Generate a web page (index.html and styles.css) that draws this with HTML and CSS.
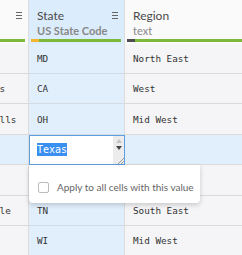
FILE: index.html
```html
<!DOCTYPE html>
<html lang="en">
<head>
    <meta charset="UTF-8">
    <meta name="viewport" content="width=device-width, initial-scale=1.0">
    <title>Sheet editor</title>
    <link rel="stylesheet" href="styles.css">
</head>
<body>
    <div class="viewport">
        <div class="sheet">
            <div class="head-cell">
                <div class="col-title"><span>City</span><span class="menu"></span></div>
                <div class="col-sub">text</div>
                <div class="col-bar"><span class="bar-type type-text"></span><span class="bar-fill"></span></div>
            </div>
            <div class="head-cell state">
                <div class="col-title"><span>State</span><span class="menu"></span></div>
                <div class="col-sub">US State Code</div>
                <div class="col-bar"><span class="bar-type type-code"></span><span class="bar-fill"></span></div>
            </div>
            <div class="head-cell">
                <div class="col-title"><span>Region</span><span class="menu"></span></div>
                <div class="col-sub thin">text</div>
                <div class="col-bar"><span class="bar-type type-text"></span><span class="bar-fill"></span></div>
            </div>

            <div class="cell">Baltimore</div>
            <div class="cell state">MD</div>
            <div class="cell">North East</div>

            <div class="cell">Palm Springs</div>
            <div class="cell state">CA</div>
            <div class="cell">West</div>

            <div class="cell">Cuyahoga Falls</div>
            <div class="cell state">OH</div>
            <div class="cell">Mid West</div>

            <div class="cell selected">Austin</div>
            <div class="cell state editing">
                <div class="editor">
                    <div class="editor-text"><span class="sel">Texas</span></div>
                    <div class="editor-scroll">
                        <span class="arrow up"></span>
                        <span class="arrow down"></span>
                        <svg class="grip" width="7" height="7" viewBox="0 0 7 7">
                            <path d="M1 7 L7 1 M4 7 L7 4" stroke="#999" stroke-width="1" fill="none"/>
                        </svg>
                    </div>
                </div>
                <div class="apply-popup">
                    <span class="checkbox"></span>
                    <span>Apply to all cells with this value</span>
                </div>
            </div>
            <div class="cell selected"></div>

            <div class="cell">Portland</div>
            <div class="cell state"></div>
            <div class="cell"></div>

            <div class="cell">Maynardsville</div>
            <div class="cell state">TN</div>
            <div class="cell">South East</div>

            <div class="cell">Madison</div>
            <div class="cell state">WI</div>
            <div class="cell">Mid West</div>
        </div>
    </div>
</body>
</html>
```

FILE: styles.css
```css
body {
    margin: 0;
    background-color: #f5f5f7;
    font-family: Lato, "Open Sans", sans-serif;
    overflow: hidden;
}
.viewport {
    width: 242px;
    height: 255px;
    overflow: hidden;
}
.sheet {
    display: grid;
    grid-template-columns: 99px 96px 140px;
    grid-template-rows: 43.6px repeat(7, 30.4px);
    margin-left: -70px;
}
.head-cell {
    display: flex;
    flex-direction: column;
    background-color: #fafafa;
    border-right: 1px solid #dcdcdc;
    padding-top: 7px;
    min-width: 0;
}
.head-cell.state {
    background-color: #dbecfc;
}
.col-title {
    display: flex;
    justify-content: space-between;
    align-items: center;
    padding: 0 6px 0 8px;
    font-size: 12px;
    color: #4a4a4a;
    height: 16px;
}
.col-sub {
    padding-left: 8px;
    margin-top: 1px;
    font-size: 11px;
    font-weight: bold;
    color: #888;
}
.col-sub.thin {
    font-weight: normal;
}
.menu {
    width: 6px;
    height: 5px;
    border-top: 1px solid #666;
    border-bottom: 1px solid #666;
    background: linear-gradient(#666, #666) center / 100% 1px no-repeat;
}
.col-bar {
    display: flex;
    height: 3px;
    margin: auto 3px 1.6px 2px;
}
.bar-type {
    width: 8px;
}
.type-text {
    background-color: #4d4d4f;
}
.type-code {
    background-color: #f4b630;
}
.bar-fill {
    flex: 1;
    background-color: #7cb83a;
}
.cell {
    display: flex;
    align-items: center;
    padding-left: 8px;
    font-family: "DejaVu Sans Mono", monospace;
    font-size: 9.3px;
    color: #333;
    white-space: nowrap;
    overflow: hidden;
    border-right: 1px solid #dcdcdc;
    border-bottom: 1px solid #dadada;
    background-color: #f5f5f7;
}
.cell.state {
    background-color: #e1effc;
    border-bottom-color: #d3dce5;
}
.cell.selected {
    background-color: #e1effc;
}
.cell.editing {
    position: relative;
    overflow: visible;
    z-index: 2;
}
.editor {
    position: absolute;
    top: 0;
    left: 0;
    right: -1px;
    bottom: -1px;
    display: flex;
    background-color: #fff;
    border: 1px solid #5d9fe0;
}
.editor-text {
    flex: 1;
    display: flex;
    align-items: center;
    padding-left: 7px;
    font-size: 10px;
}
.sel {
    background-color: #3b8ff0;
    color: #fff;
    padding: 1px 0;
}
.editor-scroll {
    width: 11px;
    display: flex;
    flex-direction: column;
    align-items: center;
    background-color: #ececec;
    padding-top: 3px;
}
.arrow {
    width: 0;
    height: 0;
    border-left: 3px solid transparent;
    border-right: 3px solid transparent;
}
.arrow.up {
    border-bottom: 4px solid #c4c4c4;
}
.arrow.down {
    margin-top: 3px;
    border-top: 4px solid #444;
}
.grip {
    margin-top: auto;
    align-self: flex-end;
}
.apply-popup {
    position: absolute;
    top: calc(100% + 1px);
    left: 0;
    width: 171px;
    height: 38px;
    box-sizing: border-box;
    display: flex;
    align-items: center;
    gap: 8px;
    padding: 6px 0 0 9px;
    background-color: #fff;
    border-radius: 0 0 4px 4px;
    box-shadow: 0 2px 5px rgba(0, 0, 0, 0.18);
    font-family: Lato, sans-serif;
    font-size: 10px;
    color: #666;
}
.checkbox {
    width: 9px;
    height: 9px;
    border: 1px solid #bbb;
    border-radius: 2px;
    background-color: #fff;
}
```
